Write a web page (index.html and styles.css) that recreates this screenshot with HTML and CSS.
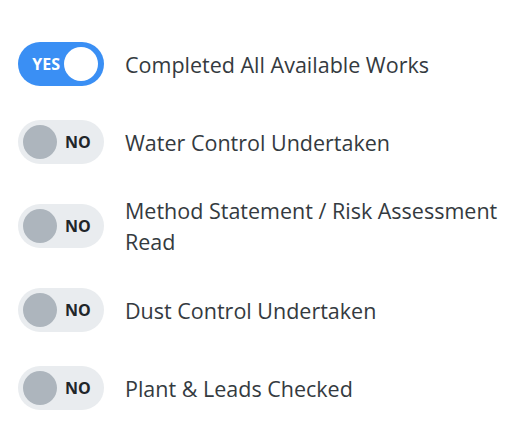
FILE: index.html
```html
<!DOCTYPE html>
<html lang="en">
<head>
  <meta charset="UTF-8" />
  <meta name="viewport" content="width=device-width, initial-scale=1.0"/>
  <title>Checklist</title>
  <link rel="stylesheet" href="styles.css">
</head>
<body>

<ul class="checks">
  <li class="row">
    <span class="toggle on"><span class="txt">YES</span><span class="knob"></span></span>
    <span class="label">Completed All Available Works</span>
  </li>
  <li class="row">
    <span class="toggle"><span class="knob"></span><span class="txt">NO</span></span>
    <span class="label">Water Control Undertaken</span>
  </li>
  <li class="row">
    <span class="toggle"><span class="knob"></span><span class="txt">NO</span></span>
    <span class="label">Method Statement / Risk Assessment Read</span>
  </li>
  <li class="row">
    <span class="toggle"><span class="knob"></span><span class="txt">NO</span></span>
    <span class="label">Dust Control Undertaken</span>
  </li>
  <li class="row">
    <span class="toggle"><span class="knob"></span><span class="txt">NO</span></span>
    <span class="label">Plant &amp; Leads Checked</span>
  </li>
</ul>

</body>
</html>
```

FILE: styles.css
```css
body { margin: 0; background: #fff; font-family: 'Open Sans', sans-serif; color: #343a40; }
.checks { list-style: none; margin: 0; padding: 42px 16px 0 18px; display: flex; flex-direction: column; gap: 34px; }
.row { display: flex; align-items: center; gap: 21px; }
.toggle {
  flex: none; width: 86px; height: 44px; border-radius: 22px; background: #e9ecef;
  display: flex; align-items: center; box-sizing: border-box; padding: 0 5px; gap: 8px;
}
.toggle .knob { width: 34px; height: 34px; border-radius: 50%; background: #adb5bd; }
.toggle .txt { font-size: 16px; font-weight: 700; color: #212529; }
.toggle.on { background: #3a8ff4; justify-content: flex-end; padding-right: 6px; gap: 4px; }
.toggle.on .knob { background: #fff; }
.toggle.on .txt { color: #fff; }
.label { font-size: 21.5px; line-height: 31px; margin: -3px 0; }
```
